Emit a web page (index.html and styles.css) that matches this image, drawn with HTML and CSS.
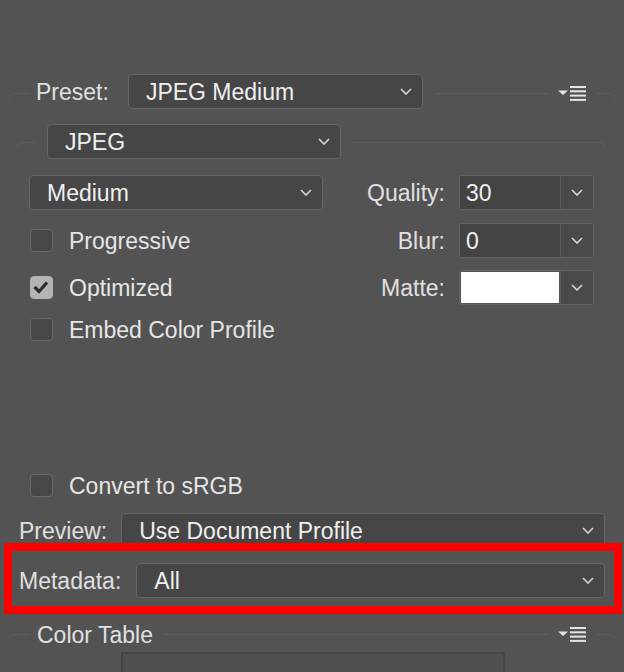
FILE: index.html
```html
<!DOCTYPE html>
<html>
<head>
<meta charset="utf-8">
<link rel="stylesheet" href="styles.css">
</head>
<body>
<div class="panel">
  <div class="row hdr preset-row">
    <span class="seg corner-l pl"></span>
    <span class="label">Preset:</span>
    <div class="dd preset-dd"><span>JPEG Medium</span><svg class="chev" viewBox="0 0 12 7"><polyline points="1,1 6,6 11,1"/></svg></div>
    <span class="seg mid"></span>
    <svg class="menu" viewBox="0 0 28 15"><polygon points="0,4.5 10,4.5 5,9"/><rect x="12" y="0" width="16" height="2"/><rect x="12" y="4.3" width="16" height="2"/><rect x="12" y="8.6" width="16" height="2"/><rect x="12" y="12.9" width="16" height="2"/></svg>
    <span class="seg corner-r pr"></span>
  </div>

  <div class="row hdr jpeg-row">
    <span class="seg corner-l jl"></span>
    <div class="dd jpeg-dd"><span>JPEG</span><svg class="chev" viewBox="0 0 12 7"><polyline points="1,1 6,6 11,1"/></svg></div>
    <span class="seg corner-r jr"></span>
  </div>

  <div class="row opt-row quality-row">
    <div class="dd medium-dd"><span>Medium</span><svg class="chev" viewBox="0 0 12 7"><polyline points="1,1 6,6 11,1"/></svg></div>
    <span class="spacer"></span>
    <span class="label">Quality:</span>
    <div class="field"><span class="val">30</span><span class="btn"><svg class="chev" viewBox="0 0 12 7"><polyline points="1,1 6,6 11,1"/></svg></span></div>
  </div>

  <div class="row opt-row blur-row">
    <span class="cb"></span><span class="cb-label">Progressive</span>
    <span class="spacer"></span>
    <span class="label">Blur:</span>
    <div class="field"><span class="val">0</span><span class="btn"><svg class="chev" viewBox="0 0 12 7"><polyline points="1,1 6,6 11,1"/></svg></span></div>
  </div>

  <div class="row opt-row matte-row">
    <span class="cb checked"><svg viewBox="0 0 20 20"><polyline points="3.5,10 8,14.5 16,5.5"/></svg></span><span class="cb-label">Optimized</span>
    <span class="spacer"></span>
    <span class="label">Matte:</span>
    <div class="field"><span class="val white"></span><span class="btn"><svg class="chev" viewBox="0 0 12 7"><polyline points="1,1 6,6 11,1"/></svg></span></div>
  </div>

  <div class="row opt-row embed-row">
    <span class="cb"></span><span class="cb-label">Embed Color Profile</span>
  </div>

  <div class="row opt-row convert-row">
    <span class="cb"></span><span class="cb-label">Convert to sRGB</span>
  </div>

  <div class="row wide-row preview-row">
    <span class="label">Preview:</span>
    <div class="dd grow"><span>Use Document Profile</span><svg class="chev" viewBox="0 0 12 7"><polyline points="1,1 6,6 11,1"/></svg></div>
  </div>

  <div class="row wide-row meta-row">
    <span class="label">Metadata:</span>
    <div class="dd grow"><span>All</span><svg class="chev" viewBox="0 0 12 7"><polyline points="1,1 6,6 11,1"/></svg></div>
  </div>

  <div class="row hdr ct-row">
    <span class="seg corner-l cl"></span>
    <span class="label">Color Table</span>
    <span class="seg mid"></span>
    <svg class="menu" viewBox="0 0 28 15"><polygon points="0,4.5 10,4.5 5,9"/><rect x="12" y="0" width="16" height="2"/><rect x="12" y="4.3" width="16" height="2"/><rect x="12" y="8.6" width="16" height="2"/><rect x="12" y="12.9" width="16" height="2"/></svg>
    <span class="seg corner-r pr"></span>
  </div>

  <div class="ct-box"></div>

  <div class="highlight"></div>
</div>
</body>
</html>
```

FILE: styles.css
```css
* { box-sizing: border-box; }
html, body {
  margin: 0;
  padding: 0;
  background: #535353;
}
body {
  width: 624px;
  height: 672px;
  overflow: hidden;
  font-family: "Liberation Sans", Arial, sans-serif;
  font-size: 23px;
  color: #e6e6e6;
}
.panel {
  position: relative;
  width: 624px;
  height: 672px;
  padding-top: 74px;
}
.row {
  display: flex;
  align-items: center;
  height: 35px;
}
.hdr { align-items: flex-start; }
.hdr .label, .hdr .dd { align-self: center; }

.label { color: #e0e0e0; white-space: nowrap; padding-top: 2px; }
.dd span, .cb-label, .field .val { padding-top: 2px; }

.seg {
  height: 10px;
  border-top: 1px solid #5f5f5f;
  margin-top: var(--line);
}
.corner-l {
  border-left: 1px solid #5f5f5f;
  border-top-left-radius: 7px;
  -webkit-mask-image: linear-gradient(to bottom, #000 30%, transparent 100%);
  mask-image: linear-gradient(to bottom, #000 30%, transparent 100%);
}
.corner-r {
  border-right: 1px solid #5f5f5f;
  border-top-right-radius: 7px;
  -webkit-mask-image: linear-gradient(to bottom, #000 30%, transparent 100%);
  mask-image: linear-gradient(to bottom, #000 30%, transparent 100%);
}
.mid { flex: 1; }

.menu {
  width: 28px;
  height: 15px;
  fill: #e4e4e4;
  margin-top: calc(var(--line) - 7px);
  flex: none;
}

/* dropdown */
.dd {
  display: flex;
  align-items: center;
  justify-content: space-between;
  height: 35px;
  padding: 0 10px 0 17px;
  background: #464646;
  border: 1px solid #666;
  border-radius: 4px;
  color: #f0f0f0;
  flex: none;
}
.dd.grow { flex: 1; }
.chev {
  width: 12px;
  height: 7px;
  fill: none;
  stroke: #d6d6d6;
  stroke-width: 1.6;
  flex: none;
}

/* preset row */
.preset-row { --line: 19px; }
.preset-row .pl { width: 22px; margin-left: 8px; }
.preset-row .label { margin-left: 6px; }
.preset-dd { width: 295px; margin-left: 19px; }
.preset-row .mid { margin-left: 13px; margin-right: 9px; }
.pr { width: 19px; margin-left: 11px; margin-right: 8px; }

/* jpeg row */
.jpeg-row { --line: 18px; margin-top: 15px; }
.jl { width: 20px; margin-left: 15px; }
.jpeg-dd { width: 294px; margin-left: 12px; }
.jr { flex: 1; margin-left: 11px; margin-right: 18px; }

/* option rows */
.opt-row { padding-left: 29px; padding-right: 30px; }
.quality-row { margin-top: 16px; }
.blur-row { margin-top: 13px; padding-left: 30px; }
.matte-row { margin-top: 12px; padding-left: 30px; }
.embed-row { margin-top: 7px; padding-left: 30px; }
.convert-row { margin-top: 121px; padding-left: 30px; }
.medium-dd { width: 294px; }
.spacer { flex: 1; }

.field {
  display: flex;
  width: 135px;
  height: 35px;
  margin-left: 14px;
  border: 1px solid #646464;
  border-radius: 3px;
  overflow: hidden;
  flex: none;
}
.field .val {
  width: 100px;
  padding-left: 6px;
  display: flex;
  align-items: center;
  background: #434343;
  color: #f0f0f0;
}
.field .val.white { background: #ffffff; margin: 1px; width: 98px; }
.field .btn {
  flex: 1;
  display: flex;
  align-items: center;
  justify-content: center;
  background: #4a4a4a;
  border-left: 1px solid #5c5c5c;
}

/* checkbox */
.cb {
  width: 23px;
  height: 23px;
  border: 1.5px solid #6a6a6a;
  border-radius: 4px;
  background: #474747;
  flex: none;
  display: flex;
}
.cb.checked {
  background: #b4b4b4;
  border-color: #b4b4b4;
}
.cb svg {
  width: 20px;
  height: 20px;
  fill: none;
  stroke: #2c2c2c;
  stroke-width: 3.2;
}
.cb-label {
  margin-left: 16px;
  color: #e6e6e6;
  white-space: nowrap;
}

/* preview / metadata */
.wide-row { padding-left: 19px; padding-right: 19px; }
.preview-row { margin-top: 10px; }
.preview-row .dd { margin-left: 14px; }
.meta-row { margin-top: 15px; }
.meta-row .dd { margin-left: 15px; }

/* color table */
.ct-row { --line: 17px; margin-top: 19px; }
.cl { width: 23px; margin-left: 7px; }
.ct-row .label { margin-left: 7px; }
.ct-row .mid { margin-left: 11px; margin-right: 9px; }

.ct-box {
  margin-left: 121px;
  width: 384px;
  height: 30px;
  background: #505050;
  border: 2px solid #444;
  border-bottom: none;
}

/* annotation overlay */
.highlight {
  position: absolute;
  left: 4px;
  top: 543px;
  width: 618px;
  height: 71px;
  border: 8px solid #fe0000;
  pointer-events: none;
}
```
